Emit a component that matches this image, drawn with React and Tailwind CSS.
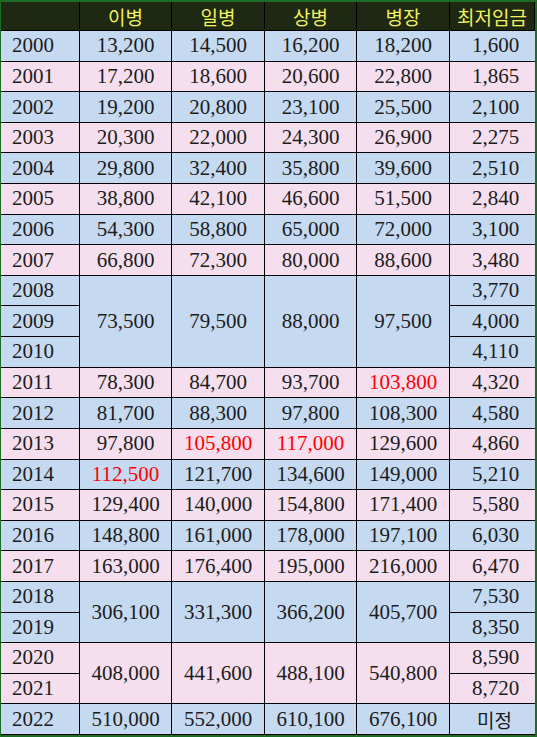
import React from 'react';

const BLUE = 'bg-[#c5d9f1]';
const PINK = 'bg-[#f5dfee]';

// [year, 이병, 일병, 상병, 병장, 최저임금, bg]
// null = covered by a merged cell above
const rows = [
    ['2000', '13,200', '14,500', '16,200', '18,200', '1,600', BLUE],
    ['2001', '17,200', '18,600', '20,600', '22,800', '1,865', PINK],
    ['2002', '19,200', '20,800', '23,100', '25,500', '2,100', BLUE],
    ['2003', '20,300', '22,000', '24,300', '26,900', '2,275', PINK],
    ['2004', '29,800', '32,400', '35,800', '39,600', '2,510', BLUE],
    ['2005', '38,800', '42,100', '46,600', '51,500', '2,840', PINK],
    ['2006', '54,300', '58,800', '65,000', '72,000', '3,100', BLUE],
    ['2007', '66,800', '72,300', '80,000', '88,600', '3,480', PINK],
    ['2008', { v: '73,500', span: 3 }, { v: '79,500', span: 3 }, { v: '88,000', span: 3 }, { v: '97,500', span: 3 }, '3,770', BLUE],
    ['2009', null, null, null, null, '4,000', BLUE],
    ['2010', null, null, null, null, '4,110', BLUE],
    ['2011', '78,300', '84,700', '93,700', { v: '103,800', red: true }, '4,320', PINK],
    ['2012', '81,700', '88,300', '97,800', '108,300', '4,580', BLUE],
    ['2013', '97,800', { v: '105,800', red: true }, { v: '117,000', red: true }, '129,600', '4,860', PINK],
    ['2014', { v: '112,500', red: true }, '121,700', '134,600', '149,000', '5,210', BLUE],
    ['2015', '129,400', '140,000', '154,800', '171,400', '5,580', PINK],
    ['2016', '148,800', '161,000', '178,000', '197,100', '6,030', BLUE],
    ['2017', '163,000', '176,400', '195,000', '216,000', '6,470', PINK],
    ['2018', { v: '306,100', span: 2 }, { v: '331,300', span: 2 }, { v: '366,200', span: 2 }, { v: '405,700', span: 2 }, '7,530', BLUE],
    ['2019', null, null, null, null, '8,350', BLUE],
    ['2020', { v: '408,000', span: 2 }, { v: '441,600', span: 2 }, { v: '488,100', span: 2 }, { v: '540,800', span: 2 }, '8,590', PINK],
    ['2021', null, null, null, null, '8,720', PINK],
    ['2022', '510,000', '552,000', '610,100', '676,100', '미정', BLUE],
];

const headers = ['', '이병', '일병', '상병', '병장', '최저임금'];

const spanClass = { 1: '', 2: 'row-span-2', 3: 'row-span-3' };

export default function App() {
    return (
        <div
            className="w-[537px] h-[737px] bg-white"
            style={{ fontFamily: '"Liberation Serif", "Noto Sans CJK KR", serif' }}
        >
            <div className="w-full h-full border-t-2 border-l border-r-2 border-b-2 border-[#1d6b24] grid grid-cols-[79px_92px_93px_92px_93px_1fr] grid-rows-[29px_repeat(23,1fr)] text-[21px] text-[#1c1c1c]">
                {headers.map((h, i) => (
                    <div
                        key={'h' + i}
                        className="bg-[#1e2812] border-r border-b border-black last:border-r-0 flex items-center justify-center text-[#f2f25a] text-[19px] leading-none"
                        style={{ fontFamily: '"Noto Sans CJK KR", sans-serif' }}
                    >
                        {h}
                    </div>
                ))}
                {rows.map((r) => {
                    const bg = r[6];
                    return (
                        <React.Fragment key={r[0]}>
                            <div className={`${bg} border-r border-b border-black flex items-center pl-[11px] leading-none`}>
                                {r[0]}
                            </div>
                            {r.slice(1, 5).map((c, j) => {
                                if (c === null) return null;
                                const cell = typeof c === 'string' ? { v: c } : c;
                                return (
                                    <div
                                        key={j}
                                        className={`${bg} ${spanClass[cell.span || 1]} border-r border-b border-black flex items-center justify-center leading-none ${cell.red ? 'text-[#ff0000]' : ''}`}
                                    >
                                        {cell.v}
                                    </div>
                                );
                            })}
                            {r[5] === '미정' ? (
                                <div
                                    className={`${bg} border-b border-black flex items-center justify-center pl-[4px] text-[19px] leading-none`}
                                    style={{ fontFamily: '"Noto Sans CJK KR", sans-serif' }}
                                >
                                    {r[5]}
                                </div>
                            ) : (
                                <div className={`${bg} border-b border-black flex items-center justify-center pl-[6px] leading-none`}>
                                    {r[5]}
                                </div>
                            )}
                        </React.Fragment>
                    );
                })}
            </div>
        </div>
    );
}
